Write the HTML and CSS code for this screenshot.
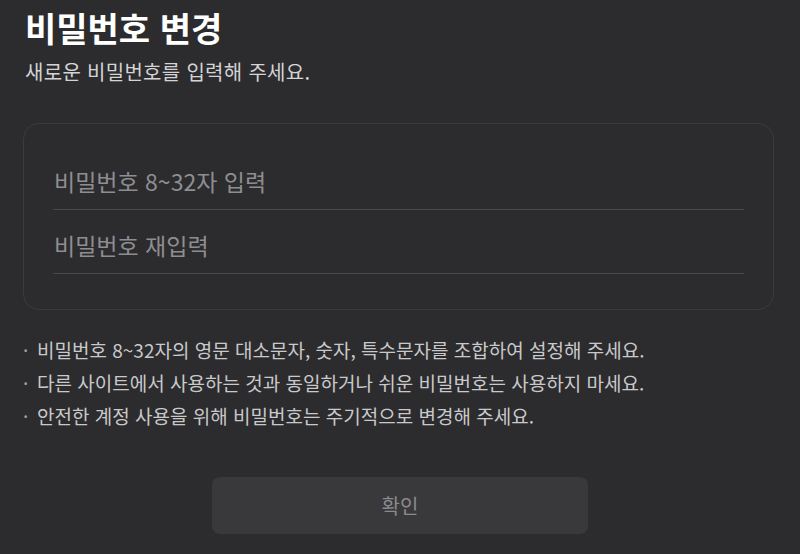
FILE: index.html
```html
<!DOCTYPE html>
<html lang="ko">
<head>
<meta charset="utf-8">
<link rel="stylesheet" href="styles.css">
</head>
<body>
<main class="page">
  <h1 class="title">비밀번호 변경</h1>
  <p class="subtitle">새로운 비밀번호를 입력해 주세요.</p>
  <section class="card">
    <div class="field"><span class="placeholder">비밀번호 8~32자 입력</span></div>
    <div class="field"><span class="placeholder">비밀번호 재입력</span></div>
  </section>
  <ul class="notes">
    <li>비밀번호 8~32자의 영문 대소문자, 숫자, 특수문자를 조합하여 설정해 주세요.</li>
    <li>다른 사이트에서 사용하는 것과 동일하거나 쉬운 비밀번호는 사용하지 마세요.</li>
    <li>안전한 계정 사용을 위해 비밀번호는 주기적으로 변경해 주세요.</li>
  </ul>
  <div class="actions">
    <button class="confirm" type="button">확인</button>
  </div>
</main>
</body>
</html>
```

FILE: styles.css
```css
html, body {
  margin: 0;
  padding: 0;
  background: #2c2c2e;
}
body {
  font-family: "Noto Sans CJK KR", "Noto Sans", sans-serif;
  color: #fff;
  width: 800px;
  height: 554px;
  overflow: hidden;
}
.page {
  padding: 0 26px 0 23px;
  display: flex;
  flex-direction: column;
}
.title {
  margin: 6px 0 0 2px;
  font-size: 34px;
  font-weight: 700;
  line-height: 44px;
  color: #ffffff;
}
.subtitle {
  margin: 9px 0 0 2px;
  font-size: 20px;
  letter-spacing: 0.3px;
  line-height: 26px;
  color: #d4d4d6;
}
.card {
  margin-top: 38px;
  border: 1.5px solid #3b3b3d;
  border-radius: 16px;
  padding: 22px 29px 35px 29px;
  display: flex;
  flex-direction: column;
}
.field {
  height: 57px;
  padding-top: 6px;
  border-bottom: 1.5px solid #48484a;
  display: flex;
  align-items: center;
}
.placeholder {
  font-size: 23px;
  color: #8e8e92;
  padding-left: 1px;
}
.notes {
  list-style: none;
  margin: 26px 0 0 0;
  padding: 0;
  display: flex;
  flex-direction: column;
  gap: 6px;
}
.notes li {
  font-size: 19px;
  line-height: 27px;
  color: #c9c9cb;
  padding-left: 14px;
  position: relative;
}
.notes li::before {
  content: "·";
  position: absolute;
  left: 0;
  top: 0;
  color: #a0a0a2;
}
.actions {
  display: flex;
  justify-content: center;
  margin-top: 48px;
  padding-left: 3px;
}
.confirm {
  width: 376px;
  height: 57px;
  border: none;
  border-radius: 8px;
  background: #39393b;
  color: #8a8a8c;
  font-family: "Noto Sans CJK KR", "Noto Sans", sans-serif;
  font-size: 20px;
}
```
